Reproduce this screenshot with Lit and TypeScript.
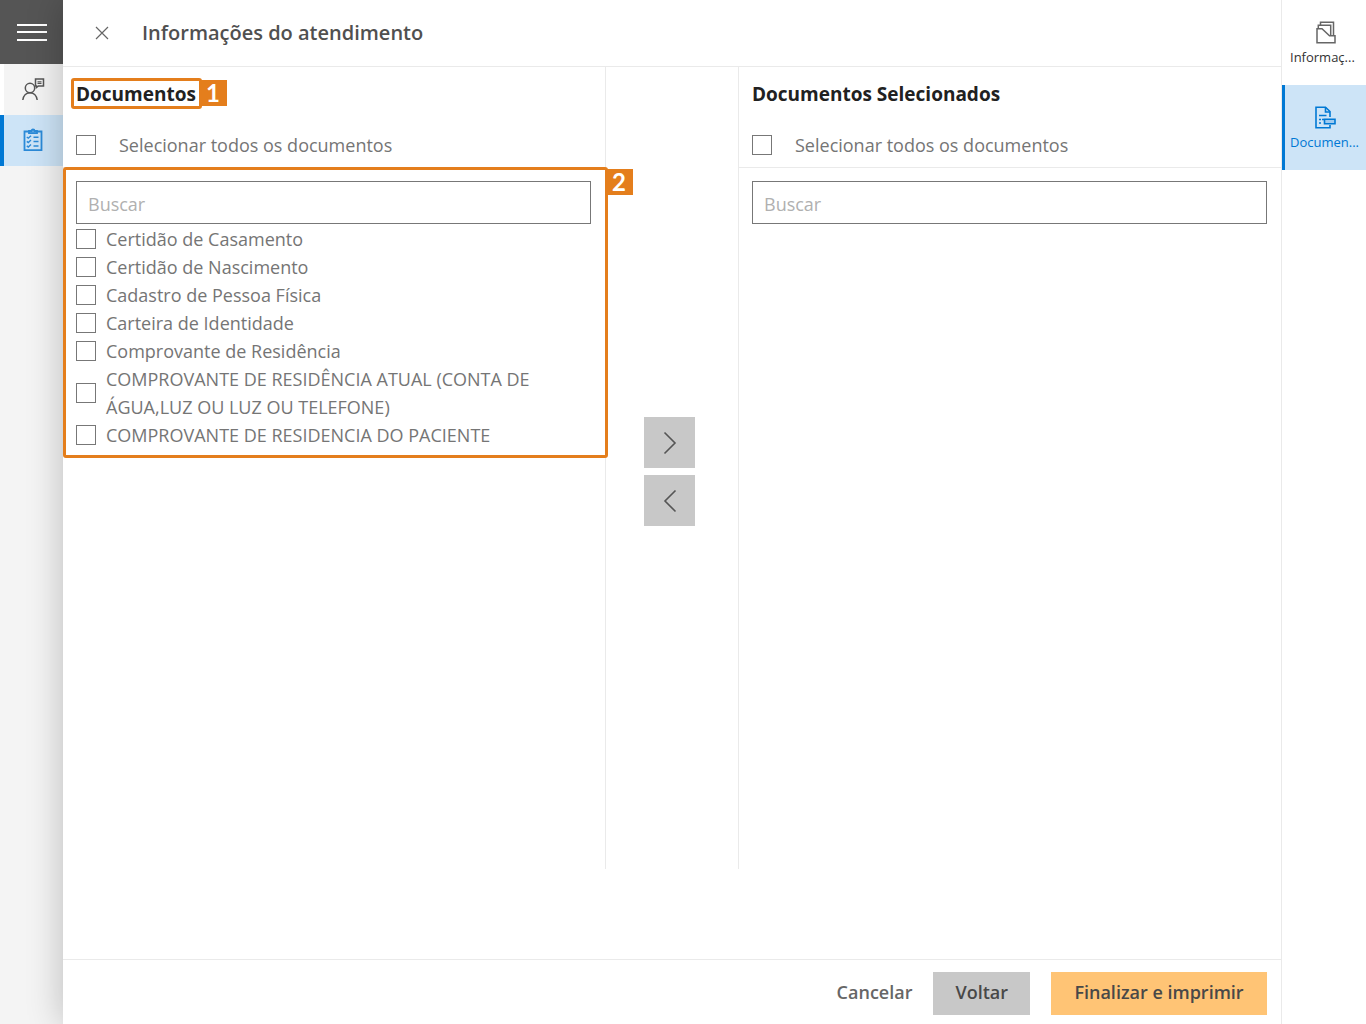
import { LitElement, html, css, svg } from "lit";
import { customElement, property, state } from "lit/decorators.js";

const DOCUMENTS = [
  "Certidão de Casamento",
  "Certidão de Nascimento",
  "Cadastro de Pessoa Física",
  "Carteira de Identidade",
  "Comprovante de Residência",
  "COMPROVANTE DE RESIDÊNCIA ATUAL (CONTA DE ÁGUA,LUZ OU LUZ OU TELEFONE)",
  "COMPROVANTE DE RESIDENCIA DO PACIENTE",
];

const controls = css`
  * {
    box-sizing: border-box;
  }
  button,
  input {
    font: inherit;
    color: inherit;
    margin: 0;
  }
  button {
    border: 0;
    padding: 0;
    background: none;
    cursor: pointer;
  }
  svg {
    display: block;
    fill: none;
    stroke: currentColor;
  }
`;

@customElement("document-panel")
export class DocumentPanel extends LitElement {
  @property() heading = "";
  @property({ attribute: false }) items: string[] = [];
  @property({ type: Boolean }) annotated = false;
  @state() private query = "";

  static styles = [
    controls,
    css`
      :host {
        display: block;
        min-width: 0;
      }
      .head {
        padding: 13px 13px 8px;
        border-bottom: 1px solid #eaeaea;
      }
      .title {
        position: relative;
        display: inline-block;
        margin: 0;
        font-size: 19px;
        line-height: 28px;
        font-weight: 700;
        color: #212121;
        vertical-align: top;
      }
      .row {
        display: flex;
        align-items: center;
        gap: 10px;
        line-height: 28px;
      }
      .all {
        gap: 23px;
        margin-top: 23px;
      }
      .check {
        appearance: none;
        flex: none;
        width: 20px;
        height: 20px;
        border: 1px solid #777;
        border-radius: 0;
        background: #fff;
      }
      .check:checked {
        background: #0078d4;
        box-shadow: inset 0 0 0 3px #fff;
      }
      .body {
        position: relative;
        padding: 13px 14px 9px 13px;
      }
      .search {
        display: block;
        width: 100%;
        height: 43px;
        padding: 2px 11px 0;
        border: 1px solid #777;
        border-radius: 0;
        background: #fff;
        outline-offset: 1px;
      }
      .search::placeholder {
        color: #b0b0b0;
        opacity: 1;
      }
      .list {
        list-style: none;
        margin: 0;
        padding: 1px 0 0;
      }
      .mark {
        position: absolute;
        border: 3px solid #e47e1c;
        border-radius: 3px;
        pointer-events: none;
      }
      .mark-title {
        inset: -2px -6px -1px -5px;
      }
      .mark-body {
        inset: -1px -3px 0 0;
      }
      .badge {
        position: absolute;
        top: -1px;
        left: 100%;
        width: 28px;
        height: 26px;
        background: #e47e1c;
        color: #fff;
        font-family: Lato, sans-serif;
        font-size: 24px;
        line-height: 26px;
        font-weight: 700;
        text-align: center;
      }
    `,
  ];

  private mark(kind: string, label: string) {
    return this.annotated
      ? html`<span class="mark ${kind}"><span class="badge">${label}</span></span>`
      : null;
  }

  private toggleAll(e: Event) {
    const on = (e.target as HTMLInputElement).checked;
    this.renderRoot
      .querySelectorAll<HTMLInputElement>(".list .check")
      .forEach((box) => (box.checked = on));
  }

  render() {
    const q = this.query.toLowerCase();
    const shown = this.items.filter((d) => d.toLowerCase().includes(q));
    return html`
      <div class="head">
        <h2 class="title">${this.heading}${this.mark("mark-title", "1")}</h2>
        <label class="row all">
          <input class="check" type="checkbox" @change=${this.toggleAll} />
          <span>Selecionar todos os documentos</span>
        </label>
      </div>
      <div class="body">
        <input
          class="search"
          type="text"
          placeholder="Buscar"
          aria-label="Buscar"
          @input=${(e: Event) => (this.query = (e.target as HTMLInputElement).value)}
        />
        <ul class="list">
          ${shown.map(
            (d) => html`<li>
              <label class="row"><input class="check" type="checkbox" /><span>${d}</span></label>
            </li>`
          )}
        </ul>
        ${this.mark("mark-body", "2")}
      </div>
    `;
  }
}

const menuIcon = svg`<svg width="30" height="20" viewBox="0 0 30 20" stroke-width="2"><path d="M0 3h30M0 10h30M0 18h30"/></svg>`;
const personIcon = svg`<svg width="24" height="24" viewBox="0 0 24 24" stroke-width="1.500"><circle cx="9" cy="11" r="4.700"/><path d="M1.800 23c.5-4.300 3.300-7.300 7.200-7.300s6.700 3 7.200 7.300"/><path d="M14.500 2h8v7h-5l-2 1.500V9h-1z"/><path d="M16.500 4.800h4M16.500 6.500h4" stroke-width="1.200"/></svg>`;
const checklistIcon = svg`<svg width="20" height="24" viewBox="0 0 20 24" stroke-width="1.800"><path d="M6 3.500H1.500v18.700h17V3.500H14"/><path d="M6 5.200V3h2.500a1.500 1.500 0 0 1 3 0H14v2.200z" fill="#7fb9e8"/><path d="M10.500 9.200h5M10.500 13.500h5M10.500 18h5" stroke-width="1.500"/><path d="M3.800 9l1.500 1.200L8 7.700M3.800 13.400l1.500 1.200L8 12.100M3.800 17.900l1.500 1.200L8 16.600" stroke-width="1.400"/></svg>`;
const closeIcon = svg`<svg width="14" height="14" viewBox="0 0 14 14" stroke-width="1.200"><path d="M1 1l12 12M13 1L1 13"/></svg>`;
const folderIcon = svg`<svg width="20" height="23" viewBox="0 0 20 23" stroke-width="1.500"><path d="M1 21.800V7.800h5l7.500 7H19v7z"/><path d="M2.300 7.800V4.300h12.400v10.500"/><path d="M4.500 4.300V1.300h13v13.500"/></svg>`;
const documentIcon = svg`<svg width="21" height="23" viewBox="0 0 21 23" stroke-width="1.600"><path d="M15 11V5.500l-4.500-4.300H1v20.600h14V19"/><path d="M10.500 1.200V6H15"/><path d="M4 9.500h7.500M4 13.500h2M7 13.500h2M4 17h2"/><path d="M9.500 13.200h10.500v4.600H9.500z" fill="#9fcbf0"/></svg>`;
const rightIcon = svg`<svg width="14" height="24" viewBox="0 0 14 24" stroke-width="1.600"><path d="M1.500 1.500L12 12 1.500 22.500"/></svg>`;
const leftIcon = svg`<svg width="14" height="24" viewBox="0 0 14 24" stroke-width="1.600"><path d="M12.500 1.500L2 12l10.500 10.500"/></svg>`;

@customElement("app-root")
export class AppRoot extends LitElement {
  static styles = [
    controls,
    css`
      :host {
        display: grid;
        grid-template-columns: 63px minmax(0, 1fr) 85px;
        min-height: 100vh;
        font-family: "Open Sans", "Noto Sans", sans-serif;
        font-size: 18px;
        color: #757575;
        background: #fff;
      }
      .nav {
        display: flex;
        flex-direction: column;
        background: #f4f4f4;
      }
      .menu {
        display: grid;
        place-items: center;
        height: 64px;
        background: #555;
        color: #fff;
      }
      .nav-item {
        display: grid;
        place-items: center;
        height: 51px;
        padding: 0 2px 2px 0;
        border-left: 4px solid #fff;
        color: #555;
      }
      .nav-item.active {
        border-color: #0078d4;
        background: #cde4f7;
        color: #2b8ad8;
      }
      .main {
        position: relative;
        display: flex;
        flex-direction: column;
        background: #fff;
        box-shadow: 0 0 34px rgba(0, 0, 0, 0.24);
      }
      .bar {
        display: flex;
        align-items: center;
        gap: 33px;
        height: 67px;
        padding-left: 32px;
        border-bottom: 1px solid #eaeaea;
      }
      .close {
        color: #666;
      }
      .bar-title {
        margin: 0;
        font-size: 20px;
        line-height: 28px;
        font-weight: 600;
        color: #505050;
      }
      .columns {
        flex: 1;
        display: grid;
        grid-template-columns: minmax(0, 1fr) 134px minmax(0, 1fr);
        margin-bottom: 90px;
      }
      .transfer {
        display: flex;
        flex-direction: column;
        justify-content: center;
        gap: 7px;
        padding: 7px 0 0 38px;
        border: solid #eaeaea;
        border-width: 0 1px;
      }
      .move {
        display: grid;
        place-items: center;
        width: 51px;
        height: 51px;
        background: #c8c8c8;
        color: #555;
      }
      .foot {
        display: flex;
        align-items: center;
        justify-content: flex-end;
        gap: 21px;
        height: 65px;
        padding: 2px 14px 0 0;
        border-top: 1px solid #eaeaea;
        font-weight: 600;
      }
      .action {
        height: 43px;
        padding: 0 22px 2px;
        color: #484848;
      }
      .cancel {
        padding-left: 0;
        padding-right: 0;
        color: #666;
      }
      .back {
        background: #c8c8c8;
      }
      .finish {
        min-width: 216px;
        background: #ffc475;
      }
      .rail {
        position: relative;
        display: flex;
        flex-direction: column;
        background: #fff;
        border-left: 1px solid #eaeaea;
      }
      .tab {
        display: flex;
        flex-direction: column;
        align-items: center;
        justify-content: center;
        gap: 4px;
        height: 85px;
        padding: 2px 5px 0;
        border-left: 3px solid transparent;
        font-size: 13px;
        line-height: 18px;
        color: #333;
      }
      .tab span {
        align-self: flex-start;
      }
      .tab svg {
        color: #666;
      }
      .tab.active,
      .tab.active svg {
        color: #0078d4;
      }
      .tab.active {
        border-color: #0078d4;
        background: #cde4f7;
      }
    `,
  ];

  render() {
    return html`
      <nav class="nav">
        <button class="menu" aria-label="Menu">${menuIcon}</button>
        <button class="nav-item" aria-label="Atendimento">${personIcon}</button>
        <button class="nav-item active" aria-label="Documentos">${checklistIcon}</button>
      </nav>
      <main class="main">
        <header class="bar">
          <button class="close" aria-label="Fechar">${closeIcon}</button>
          <h1 class="bar-title">Informações do atendimento</h1>
        </header>
        <div class="columns">
          <document-panel heading="Documentos" .items=${DOCUMENTS} annotated></document-panel>
          <div class="transfer">
            <button class="move" aria-label="Adicionar">${rightIcon}</button>
            <button class="move" aria-label="Remover">${leftIcon}</button>
          </div>
          <document-panel heading="Documentos Selecionados"></document-panel>
        </div>
        <footer class="foot">
          <button class="action cancel">Cancelar</button>
          <button class="action back">Voltar</button>
          <button class="action finish">Finalizar e imprimir</button>
        </footer>
      </main>
      <aside class="rail">
        <button class="tab">${folderIcon}<span>Informaç...</span></button>
        <button class="tab active">${documentIcon}<span>Documen...</span></button>
      </aside>
    `;
  }
}
